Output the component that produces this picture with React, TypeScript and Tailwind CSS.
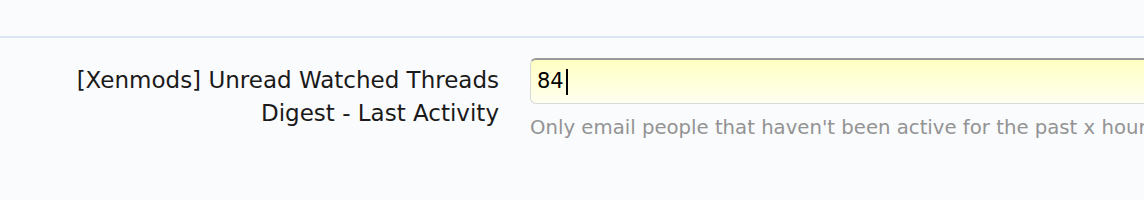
export default function App() {
	return (
		<div className="h-[200px] w-full overflow-hidden bg-[#fafbfd] font-['DejaVu_Sans',sans-serif]">
			{/* previous row edge */}
			<div className="h-[38px] border-b-2 border-[#dbe6f2]" />

			<div className="grid grid-cols-[499px_1fr] gap-x-[31px]">
				<label className="pt-[26px] text-right text-[23px] leading-[33px] text-[#1a1a1a]">
					[Xenmods] Unread Watched Threads
					<br />
					Digest - Last Activity
				</label>

				<div className="pt-[20px]">
					<div className="flex h-[46px] w-[700px] items-center rounded-[6px] border border-[#d8d8d8] border-t-2 border-t-[#9a9a9a] bg-gradient-to-b from-[#ffffc2] to-[#fffff0] px-[6px] text-[21px] text-black">
						<span>84</span>
						<span className="ml-[2px] h-[26px] w-[2px] bg-black" />
					</div>
					<p className="mt-[12px] whitespace-nowrap text-[19.7px] leading-[24px] text-[#939393]">
						Only email people that haven't been active for the past x hours
					</p>
				</div>
			</div>
		</div>
	);
}
